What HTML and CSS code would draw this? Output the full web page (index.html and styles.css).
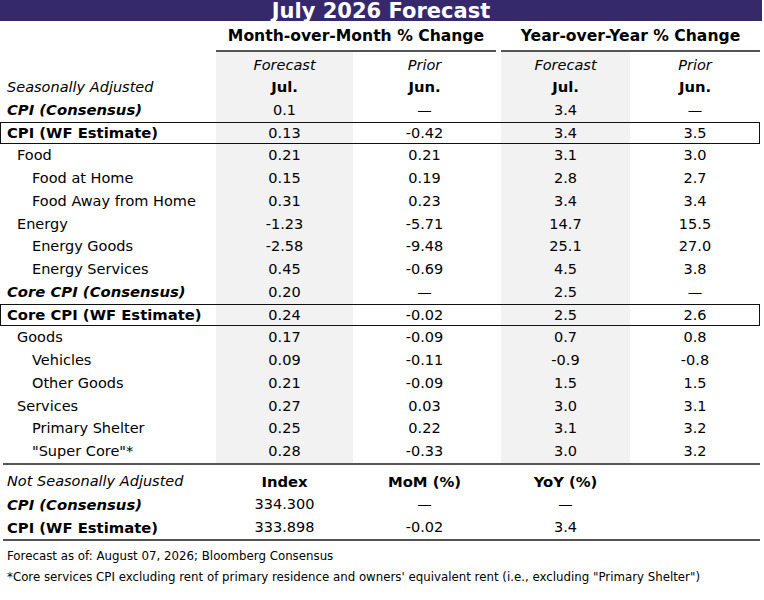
FILE: index.html
```html
<!DOCTYPE html>
<html>
<head>
<meta charset="utf-8">
<link rel="stylesheet" href="styles.css">
</head>
<body>
<div class="sheet">
  <div class="title"><span class="title-text">July 2026 Forecast</span></div>

  <div class="row groups">
    <div></div>
    <div class="group mom">Month-over-Month % Change</div>
    <div></div>
    <div class="group yoy">Year-over-Year % Change</div>
  </div>

  <div class="body">
    <div class="row first"><div class="lbl"></div><div class="sh it">Forecast</div><div class="it">Prior</div><div></div><div class="sh it">Forecast</div><div class="it">Prior</div></div>
    <div class="row"><div class="lbl it">Seasonally Adjusted</div><div class="sh b">Jul.</div><div class="b">Jun.</div><div></div><div class="sh b">Jul.</div><div class="b">Jun.</div></div>
    <div class="row"><div class="lbl b it">CPI (Consensus)</div><div class="sh">0.1</div><div>—</div><div></div><div class="sh">3.4</div><div>—</div></div>
    <div class="row boxed"><div class="lbl b">CPI (WF Estimate)</div><div class="sh">0.13</div><div>-0.42</div><div></div><div class="sh">3.4</div><div>3.5</div></div>
    <div class="row"><div class="lbl l1">Food</div><div class="sh">0.21</div><div>0.21</div><div></div><div class="sh">3.1</div><div>3.0</div></div>
    <div class="row"><div class="lbl l2">Food at Home</div><div class="sh">0.15</div><div>0.19</div><div></div><div class="sh">2.8</div><div>2.7</div></div>
    <div class="row"><div class="lbl l2">Food Away from Home</div><div class="sh">0.31</div><div>0.23</div><div></div><div class="sh">3.4</div><div>3.4</div></div>
    <div class="row"><div class="lbl l1">Energy</div><div class="sh">-1.23</div><div>-5.71</div><div></div><div class="sh">14.7</div><div>15.5</div></div>
    <div class="row"><div class="lbl l2">Energy Goods</div><div class="sh">-2.58</div><div>-9.48</div><div></div><div class="sh">25.1</div><div>27.0</div></div>
    <div class="row"><div class="lbl l2">Energy Services</div><div class="sh">0.45</div><div>-0.69</div><div></div><div class="sh">4.5</div><div>3.8</div></div>
    <div class="row"><div class="lbl b it">Core CPI (Consensus)</div><div class="sh">0.20</div><div>—</div><div></div><div class="sh">2.5</div><div>—</div></div>
    <div class="row boxed"><div class="lbl b">Core CPI (WF Estimate)</div><div class="sh">0.24</div><div>-0.02</div><div></div><div class="sh">2.5</div><div>2.6</div></div>
    <div class="row"><div class="lbl l1">Goods</div><div class="sh">0.17</div><div>-0.09</div><div></div><div class="sh">0.7</div><div>0.8</div></div>
    <div class="row"><div class="lbl l2">Vehicles</div><div class="sh">0.09</div><div>-0.11</div><div></div><div class="sh">-0.9</div><div>-0.8</div></div>
    <div class="row"><div class="lbl l2">Other Goods</div><div class="sh">0.21</div><div>-0.09</div><div></div><div class="sh">1.5</div><div>1.5</div></div>
    <div class="row"><div class="lbl l1">Services</div><div class="sh">0.27</div><div>0.03</div><div></div><div class="sh">3.0</div><div>3.1</div></div>
    <div class="row"><div class="lbl l2">Primary Shelter</div><div class="sh">0.25</div><div>0.22</div><div></div><div class="sh">3.1</div><div>3.2</div></div>
    <div class="row"><div class="lbl l2">"Super Core"*</div><div class="sh">0.28</div><div>-0.33</div><div></div><div class="sh">3.0</div><div>3.2</div></div>
  </div>

  <div class="rule"></div>

  <div class="nsa">
    <div class="row"><div class="lbl it">Not Seasonally Adjusted</div><div class="b">Index</div><div class="b">MoM (%)</div><div></div><div class="b">YoY (%)</div><div></div></div>
    <div class="row"><div class="lbl b it">CPI (Consensus)</div><div>334.300</div><div>—</div><div></div><div>—</div><div></div></div>
    <div class="row"><div class="lbl b">CPI (WF Estimate)</div><div>333.898</div><div>-0.02</div><div></div><div>3.4</div><div></div></div>
  </div>

  <div class="rule"></div>

  <div class="notes">
    <p>Forecast as of: August 07, 2026; Bloomberg Consensus</p>
    <p>*Core services CPI excluding rent of primary residence and owners' equivalent rent (i.e., excluding "Primary Shelter")</p>
  </div>
</div>
</body>
</html>
```

FILE: styles.css
```css
* {
  box-sizing: border-box;
  margin: 0;
  padding: 0;
}

body {
  margin: 0;
  background: #ffffff;
  color: #000000;
  font-family: "DejaVu Sans", Verdana, sans-serif;
  font-size: 14.5px;
}

.sheet {
  width: 764px;
}

.title {
  width: 762px;
  height: 21px;
  background: #35296b;
  text-align: center;
}

.title-text {
  display: inline-block;
  height: 21px;
  color: #ffffff;
  font-weight: bold;
  font-size: 21px;
  line-height: 22px;
  white-space: nowrap;
}

.row {
  display: grid;
  grid-template-columns: 216px 137px 143px 5px 129px 130px;
  width: 760px;
  height: 22.75px;
  line-height: 22.75px;
}

.row > div {
  text-align: center;
  white-space: nowrap;
}

.row > .lbl {
  text-align: left;
  padding-left: 7px;
}

.row > .l1 {
  padding-left: 17px;
}

.row > .l2 {
  padding-left: 32px;
}

.groups {
  height: 31px;
  line-height: 27px;
}

.group {
  grid-column: span 2;
  font-weight: bold;
  font-size: 15.6px;
  padding-top: 2px;
  border-bottom: 2px solid #555555;
}

.group.mom {
  grid-column: 2 / 4;
}

.group.yoy {
  grid-column: 5 / 7;
}

.row.first {
  height: 24px;
  line-height: 22px;
  padding-top: 2px;
}

.sh {
  background: #f2f2f2;
}

.row.first > .sh {
  margin-top: -2px;
  height: 24px;
  padding-top: 2px;
}

.b {
  font-weight: bold;
  font-size: 14.8px;
}

.it {
  font-style: italic;
}

.boxed {
  outline: 1.5px solid #111111;
  outline-offset: -1.5px;
}

.rule {
  width: 757px;
  height: 2px;
  margin-left: 3px;
  background: #555555;
}

.nsa {
  padding-top: 5px;
}

.nsa .row {
  height: 23px;
  line-height: 23px;
}

.notes {
  padding-top: 5px;
  font-size: 11.8px;
}

.notes p {
  height: 21px;
  line-height: 21px;
  padding-left: 7px;
  white-space: nowrap;
}
```
